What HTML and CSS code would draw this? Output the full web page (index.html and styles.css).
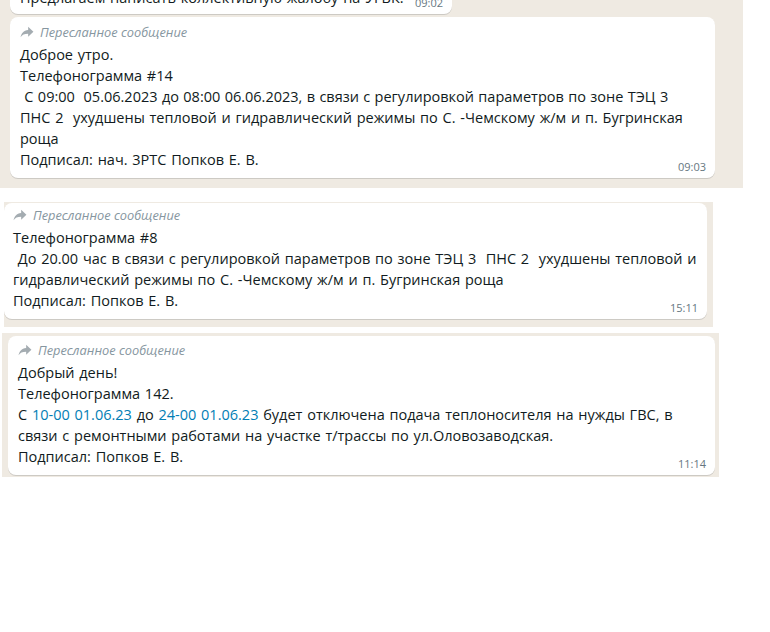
FILE: index.html
```html
<!DOCTYPE html>
<html lang="ru">
<head>
  <meta charset="UTF-8">
  <meta name="viewport" content="width=device-width, initial-scale=1.0">
  <title>Телефонограммы</title>
  <link rel="stylesheet" href="styles.css">
</head>
<body>
  <div class="shot shot-first">
    <div class="bubble bubble-cut">
      <div class="text">Предлагаем написать коллективную жалобу на УГВК.</div>
      <span class="time">09:02</span>
    </div>
    <div class="bubble">
      <div class="forwarded">
        <svg class="fwd-icon" viewBox="0 0 24 20"><path d="M14 1l9 8.5-9 8.5v-5C7.5 13 3.5 15 1 19c1-6.5 5-11.5 13-12.5V1z"/></svg>
        <span>Пересланное сообщение</span>
      </div>
      <div class="text">
        Доброе утро.<br>
        Телефонограмма #14<br>
        <span class="tight">&nbsp;С 09:00&nbsp; 05.06.2023 до 08:00 06.06.2023, в связи с регулировкой параметров по зоне ТЭЦ 3</span><br>
        ПНС 2&nbsp; ухудшены тепловой и гидравлический режимы по С. -Чемскому ж/м и п. Бугринская<br>
        роща<br>
        Подписал: нач. 3РТС Попков Е. В.
      </div>
      <span class="time">09:03</span>
    </div>
  </div>

  <div class="shot shot-second">
    <div class="bubble bubble-top">
      <div class="forwarded">
        <svg class="fwd-icon" viewBox="0 0 24 20"><path d="M14 1l9 8.5-9 8.5v-5C7.5 13 3.5 15 1 19c1-6.5 5-11.5 13-12.5V1z"/></svg>
        <span>Пересланное сообщение</span>
      </div>
      <div class="text">
        Телефонограмма #8<br>
        &nbsp;До 20.00 час в связи с регулировкой параметров по зоне ТЭЦ 3&nbsp; ПНС 2&nbsp; ухудшены тепловой и<br>
        гидравлический режимы по С. -Чемскому ж/м и п. Бугринская роща<br>
        Подписал: Попков Е. В.
      </div>
      <span class="time">15:11</span>
    </div>
  </div>

  <div class="shot shot-third">
    <div class="bubble bubble-third">
      <div class="forwarded">
        <svg class="fwd-icon" viewBox="0 0 24 20"><path d="M14 1l9 8.5-9 8.5v-5C7.5 13 3.5 15 1 19c1-6.5 5-11.5 13-12.5V1z"/></svg>
        <span>Пересланное сообщение</span>
      </div>
      <div class="text">
        Добрый день!<br>
        Телефонограмма 142.<br>
        С <span class="link">10-00 01.06.23</span> до <span class="link">24-00 01.06.23</span> будет отключена подача теплоносителя на нужды ГВС, в<br>
        связи с ремонтными работами на участке т/трассы по ул.Оловозаводская.<br>
        Подписал: Попков Е. В.
      </div>
      <span class="time">11:14</span>
    </div>
  </div>
</body>
</html>
```

FILE: styles.css
```css
:root {
  --chat-bg: #efeae2;
  --text-color: #111b21;
  --muted: #8696a0;
  --time-color: #667781;
  --link-color: #027eb5;
}

body {
  margin: 0;
  background: #fff;
  font-family: 'Open Sans', 'Noto Sans', sans-serif;
  color: var(--text-color);
}

.shot {
  background: var(--chat-bg);
  overflow: hidden;
}

.shot-first {
  width: 743px;
  height: 188px;
  padding: 0 28px 0 10px;
  box-sizing: border-box;
}

.shot-second {
  width: 709px;
  height: 125px;
  margin: 14px 0 0 4px;
  padding: 1px 6px 0 0;
  box-sizing: border-box;
}

.shot-third {
  width: 717px;
  height: 144px;
  margin: 6px 0 0 2px;
  padding: 3px 4px 0 6px;
  box-sizing: border-box;
}

.bubble {
  position: relative;
  background: #fff;
  border-radius: 8px;
  box-shadow: 0 1px 0.5px rgba(11, 20, 26, 0.15);
  padding: 6px 10px 8px;
}

.bubble-cut {
  width: 442px;
  box-sizing: border-box;
  margin-top: -19px;
  margin-bottom: 3px;
  padding: 6px 10px 6px;
}

.bubble-top {
  padding-top: 3px;
  padding-left: 9px;
}

.bubble-third {
  padding-top: 5px;
}

.forwarded {
  display: flex;
  align-items: center;
  gap: 6px;
  height: 18px;
  margin-bottom: 3px;
  font-size: 12.8px;
  font-style: italic;
  color: var(--muted);
}

.fwd-icon {
  width: 14px;
  height: 12px;
  fill: #a4acb1;
}

.text {
  font-size: 14.5px;
  line-height: 21px;
  word-spacing: 1px;
  white-space: nowrap;
}

.tight {
  word-spacing: 0.6px;
}

.link {
  color: var(--link-color);
}

.time {
  position: absolute;
  right: 9px;
  bottom: 4px;
  font-size: 11px;
  line-height: 15px;
  color: var(--time-color);
}
```
